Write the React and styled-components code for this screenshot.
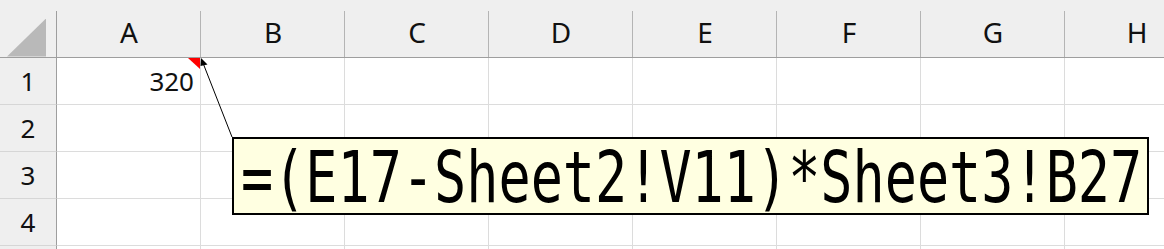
import React from "react";
import styled, { createGlobalStyle } from "styled-components";

const GlobalStyle = createGlobalStyle`
  html, body {
    margin: 0;
    padding: 0;
    background: #ffffff;
    overflow: hidden;
  }
  body {
    font-family: "Noto Sans", "Liberation Sans", sans-serif;
  }
`;

const columns = ["A", "B", "C", "D", "E", "F", "G", "H"];
const rows = [1, 2, 3, 4, 5];

const Page = styled.div`
  position: relative;
  width: 1164px;
  height: 249px;
  overflow: hidden;
`;

const Sheet = styled.div`
  display: grid;
  grid-template-columns: 57px repeat(8, 144px);
  grid-template-rows: 58px repeat(5, 47px);
`;

const HeaderCell = styled.div`
  position: relative;
  box-sizing: border-box;
  background: #efefef;
  border-bottom: 1px solid #9e9e9e;
  display: flex;
  align-items: center;
  justify-content: center;
  padding-top: 6px;
  font-size: 28px;
  color: #111;

  &::after {
    content: "";
    position: absolute;
    right: 0;
    top: 11px;
    bottom: 0;
    width: 1px;
    background: ${(p) => (p.$corner ? "#9e9e9e" : "#b4b4b4")};
  }
`;

const CornerMark = styled.div`
  width: 39px;
  height: 38px;
  margin: 12px 4px 0 0;
  background: #b9b9b9;
  clip-path: polygon(100% 0, 100% 100%, 0 100%);
`;

const RowHeader = styled.div`
  box-sizing: border-box;
  background: #efefef;
  border-right: 1px solid #9e9e9e;
  border-bottom: 1px solid #d6d6d6;
  display: flex;
  align-items: center;
  justify-content: center;
  font-size: 26px;
  color: #111;
`;

const Cell = styled.div`
  position: relative;
  box-sizing: border-box;
  border-right: 1px solid #dcdcdc;
  border-bottom: 1px solid #dcdcdc;
  display: flex;
  align-items: center;
  justify-content: flex-end;
  padding-right: 6px;
  font-size: 26px;
  color: #111;

  ${(p) =>
    p.$comment &&
    `
    &::before {
      content: "";
      position: absolute;
      top: 0;
      right: 0;
      border-style: solid;
      border-width: 0 12px 11px 0;
      border-color: transparent #ff0000 transparent transparent;
    }
  `}
`;

const Overlay = styled.svg`
  position: absolute;
  left: 0;
  top: 0;
  pointer-events: none;
`;

const Comment = styled.div`
  position: absolute;
  left: 232px;
  top: 137px;
  width: 917px;
  height: 78px;
  box-sizing: border-box;
  border: 2px solid #000;
  background: #ffffe1;
  display: flex;
  align-items: center;
  padding-left: 7px;
`;

const CommentText = styled.span`
  display: inline-block;
  flex: none;
  font-family: "DejaVu Sans Mono", "Liberation Mono", monospace;
  font-size: 71px;
  line-height: 74px;
  margin-top: 4px;
  color: #000;
  white-space: nowrap;
  transform: scaleX(0.753);
  transform-origin: left center;
`;

export default function App() {
  const cells = { A1: "320" };

  return (
    <>
      <GlobalStyle />
      <Page>
        <Sheet>
          <HeaderCell $corner>
            <CornerMark />
          </HeaderCell>
          {columns.map((c) => (
            <HeaderCell key={c}>{c}</HeaderCell>
          ))}
          {rows.map((r) => (
            <React.Fragment key={r}>
              <RowHeader>{r < 5 ? r : ""}</RowHeader>
              {columns.map((c) => (
                <Cell key={c + r} $comment={c + r === "A1"}>
                  {cells[c + r]}
                </Cell>
              ))}
            </React.Fragment>
          ))}
        </Sheet>

        <Overlay width="1164" height="249">
          <line x1="232" y1="137" x2="203" y2="63" stroke="#000" strokeWidth="1" />
          <polygon points="201,58 207.5,64.5 200.5,66" fill="#000" />
        </Overlay>

        <Comment>
          <CommentText>=(E17-Sheet2!V11)*Sheet3!B27</CommentText>
        </Comment>
      </Page>
    </>
  );
}
